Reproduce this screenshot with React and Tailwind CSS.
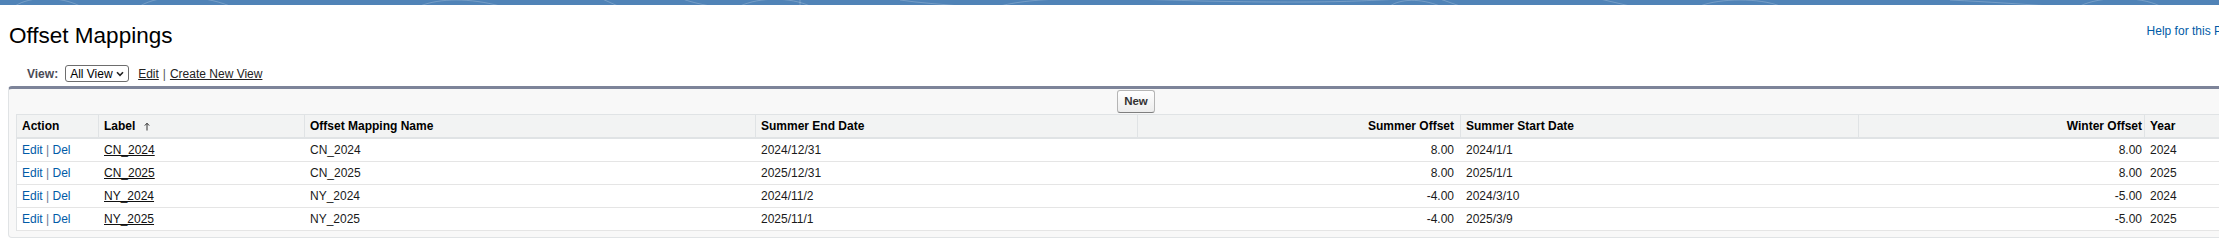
import React from 'react'

const columns = [
    { key: 'action', label: 'Action' },
    { key: 'label', label: 'Label', sorted: true },
    { key: 'name', label: 'Offset Mapping Name' },
    { key: 'endDate', label: 'Summer End Date' },
    { key: 'summerOffset', label: 'Summer Offset', right: 'pr-[6px]' },
    { key: 'startDate', label: 'Summer Start Date' },
    { key: 'winterOffset', label: 'Winter Offset', right: 'pr-[2px]' },
    { key: 'year', label: 'Year' },
]

const rows = [
    { label: 'CN_2024', name: 'CN_2024', endDate: '2024/12/31', summerOffset: '8.00', startDate: '2024/1/1', winterOffset: '8.00', year: '2024' },
    { label: 'CN_2025', name: 'CN_2025', endDate: '2025/12/31', summerOffset: '8.00', startDate: '2025/1/1', winterOffset: '8.00', year: '2025' },
    { label: 'NY_2024', name: 'NY_2024', endDate: '2024/11/2', summerOffset: '-4.00', startDate: '2024/3/10', winterOffset: '-5.00', year: '2024' },
    { label: 'NY_2025', name: 'NY_2025', endDate: '2025/11/1', summerOffset: '-4.00', startDate: '2025/3/9', winterOffset: '-5.00', year: '2025' },
]

const gridCols = 'grid grid-cols-[82px_206px_451px_382px_323px_398px_286px_1fr]'

const SortArrow = () => (
    <svg width="6" height="9" viewBox="0 0 6 9" className="ml-[9px]">
        <path d="M3 8.5V1.5" stroke="#333" strokeWidth="1" />
        <path d="M0.8 3.6L3 1.2L5.2 3.6" stroke="#333" strokeWidth="1" fill="none" />
    </svg>
)

const TopBar = () => (
    <div className="h-[5px] bg-[#5083b7] overflow-hidden">
        <svg width="2272" height="5" viewBox="0 0 2272 5">
            <g stroke="#ffffff" strokeOpacity="0.22" fill="none" strokeWidth="1">
                <path d="M15 6 C 30 -4, 60 -4, 80 6" />
                <path d="M140 6 C 160 -6, 200 -6, 230 6" />
                <path d="M420 6 C 440 -2, 470 -2, 500 6" />
                <path d="M600 -2 L 618 6" />
                <path d="M680 -2 C 690 2, 700 4, 710 6" />
                <path d="M740 6 C 760 -3, 790 -3, 810 6" />
                <path d="M800 -1 L 800 6" />
                <path d="M900 0 C 920 3, 940 4, 960 6" />
                <path d="M1000 6 C 1040 -4, 1100 -2, 1200 1 C 1300 3, 1350 2, 1400 -1" />
                <path d="M1390 6 C 1400 -1, 1420 -2, 1440 6" />
                <path d="M1440 -1 L 1460 6" />
                <path d="M1600 -1 L 1630 6" />
                <path d="M1700 6 C 1720 -2, 1760 -2, 1780 6" />
                <path d="M1950 0 C 1990 2, 2020 4, 2050 6" />
                <path d="M2080 6 C 2100 -4, 2140 -4, 2160 6" />
            </g>
        </svg>
    </div>
)

const App = () => {

    return (
        <div className="w-full overflow-hidden bg-white">
            <div className="w-[2272px] font-['Liberation_Sans',Arial,sans-serif] text-[12px] text-[#1a1a1a]">
                <TopBar />

                <div className="flex items-start justify-between">
                    <h1 className="mt-[19px] pl-[9px] text-[22.5px] leading-[23px] font-normal text-black">
                        Offset Mappings
                    </h1>
                    <div className="mt-[18px] pr-[10px] flex items-center gap-[4px]">
                        <a className="text-[#015ba7] text-[12px] leading-[14px]">Help for this Page</a>
                        <span className="w-[16px] h-[16px] rounded-full bg-[#f19d3a] text-white text-[11px] font-bold flex items-center justify-center">?</span>
                    </div>
                </div>

                <div className="mt-[18px] flex items-center h-[17px] pl-[27px]">
                    <span className="font-bold text-[#4a4a56]">View:</span>
                    <div className="ml-[7px] w-[64px] h-[17px] border border-[#6d6d6d] rounded-[3px] bg-white flex items-center justify-between pl-[4px] pr-[4px]">
                        <span className="text-black leading-none">All View</span>
                        <svg width="8" height="6" viewBox="0 0 8 6">
                            <path d="M1 1.2L4 4.4L7 1.2" stroke="#222" strokeWidth="1.6" fill="none" />
                        </svg>
                    </div>
                    <a className="ml-[9px] underline text-[#222]">Edit</a>
                    <span className="mx-[4px] text-[#555]">|</span>
                    <a className="underline text-[#222]">Create New View</a>
                </div>

                <div className="mt-[4px] ml-[8px] w-[2256px] rounded-[4px] border border-[#e0e3e5] border-t-[3px] border-t-[#7d8499] bg-[#f8f8f8] pb-[6px]">
                    <div className="flex justify-center pt-[1px] pb-[1px]">
                        <button className="w-[38px] h-[23px] rounded-[3px] border border-[#b5b5b5] border-b-[#7f7f7f] bg-gradient-to-b from-white to-[#ededed] text-[11.5px] font-bold text-[#333]">
                            New
                        </button>
                    </div>

                    <div className="mx-[7px] border-l border-t border-[#e0e3e5] bg-white">
                        <div className={`${gridCols} bg-[#f2f3f3] border-b-2 border-[#e0e3e5]`}>
                            {columns.map((col, i) => (
                                <div
                                    key={col.key}
                                    className={`h-[22px] flex items-center font-bold text-black ${i < columns.length - 1 ? 'border-r border-[#e0e3e5]' : ''} ${col.right ? `justify-end ${col.right}` : 'pl-[5px]'}`}
                                >
                                    {col.label}
                                    {col.sorted && <SortArrow />}
                                </div>
                            ))}
                        </div>

                        {rows.map((row) => (
                            <div key={row.label} className={`${gridCols} h-[23px] border-b border-[#e5e5e5] items-center`}>
                                <div className="pl-[5px]">
                                    <a className="text-[#015ba7]">Edit</a>
                                    <span className="text-[#6b7c93]"> | </span>
                                    <a className="text-[#015ba7]">Del</a>
                                </div>
                                <div className="pl-[5px]">
                                    <a className="underline text-[#111]">{row.label}</a>
                                </div>
                                <div className="pl-[5px]">{row.name}</div>
                                <div className="pl-[5px]">{row.endDate}</div>
                                <div className="text-right pr-[7px]">{row.summerOffset}</div>
                                <div className="pl-[5px]">{row.startDate}</div>
                                <div className="text-right pr-[3px]">{row.winterOffset}</div>
                                <div className="pl-[5px]">{row.year}</div>
                            </div>
                        ))}
                    </div>
                </div>
            </div>
        </div>
    )
}

export default App
